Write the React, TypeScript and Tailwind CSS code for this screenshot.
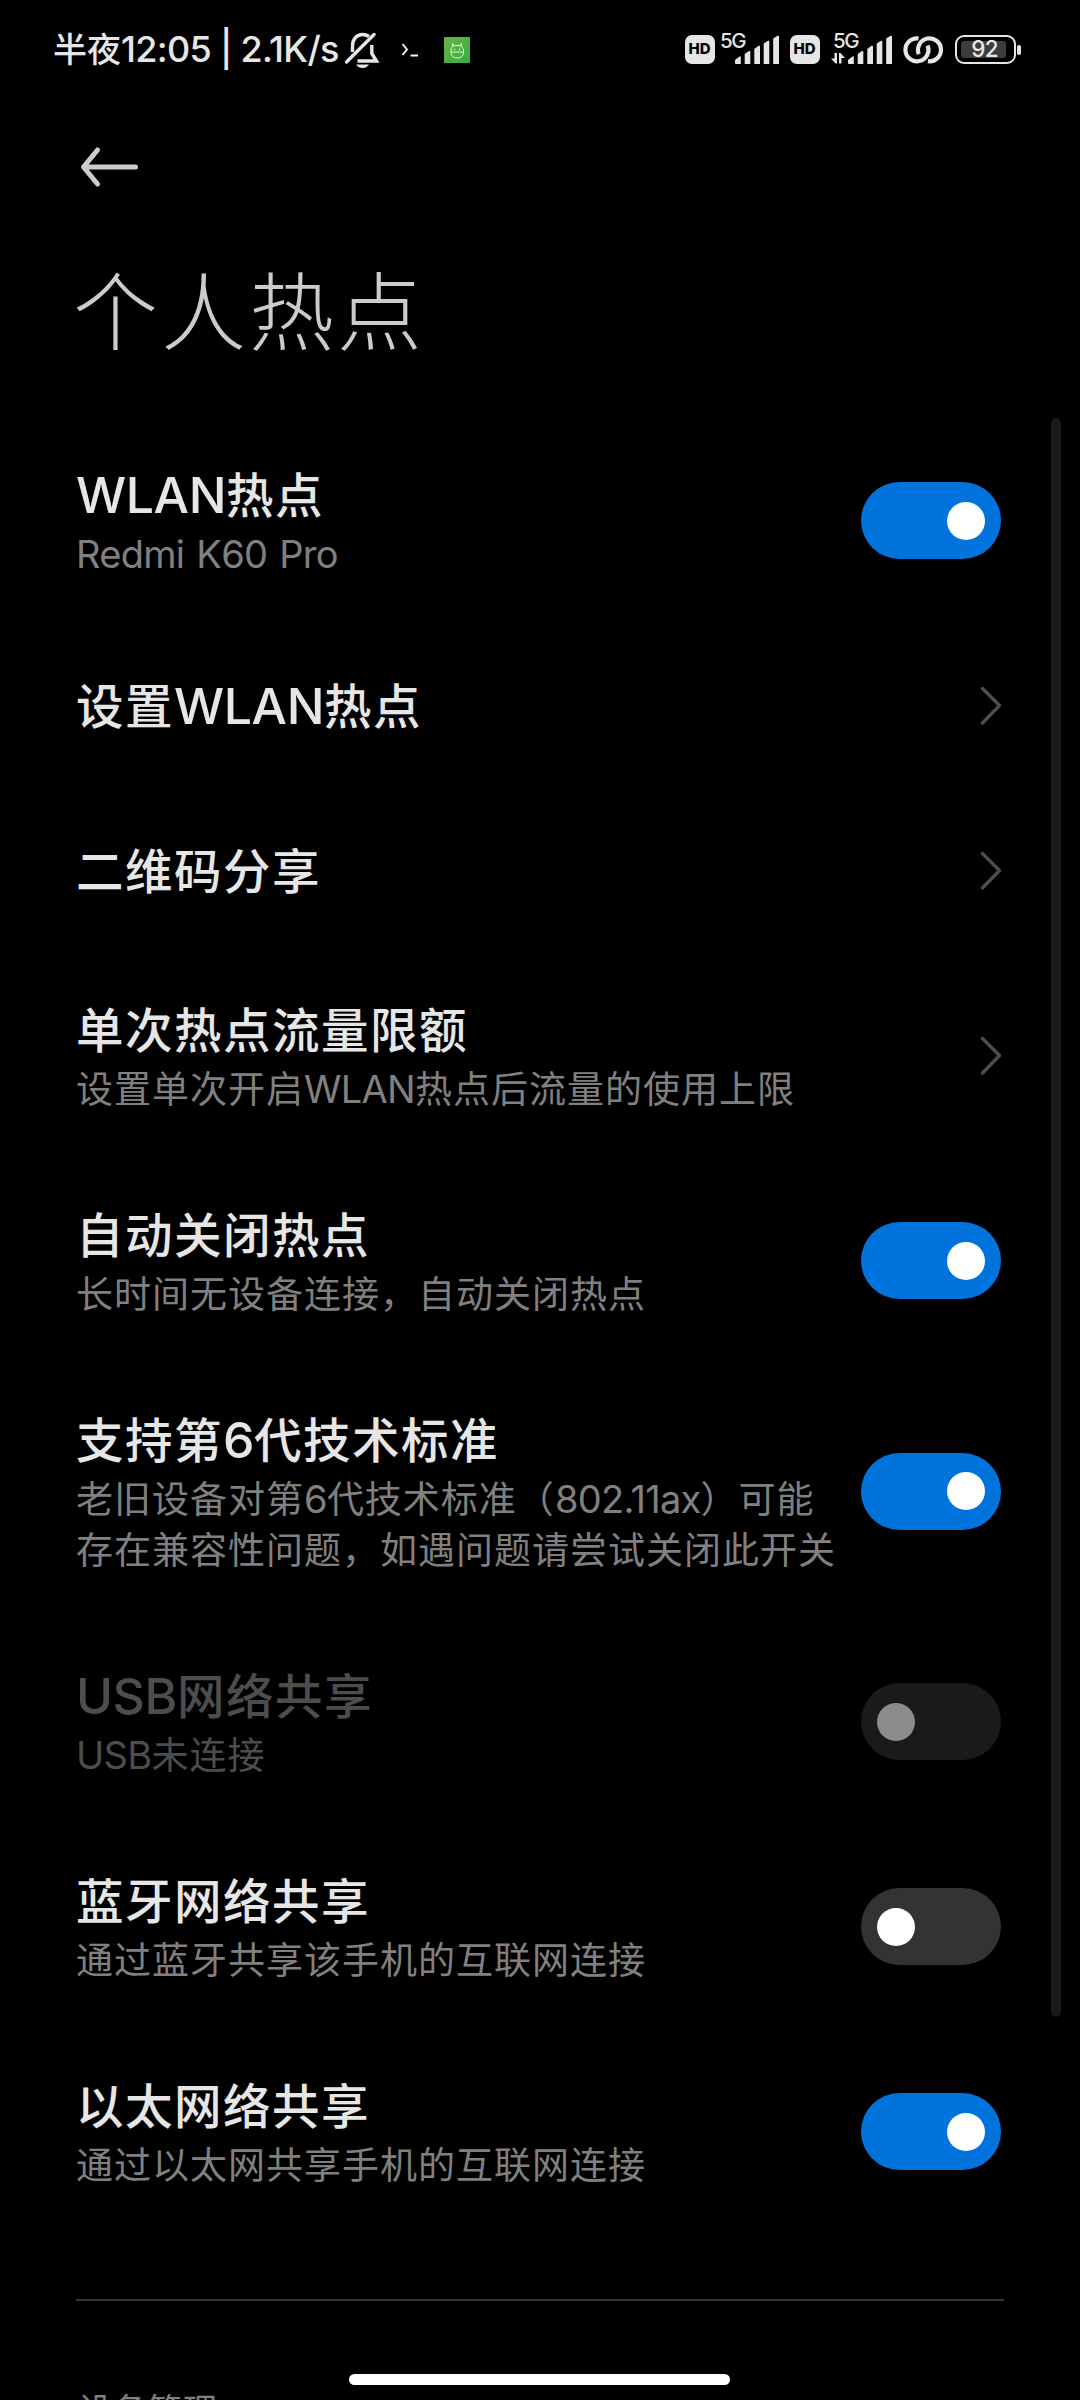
import React from "react";
import clsx from "clsx";

type Item = {
  title: string;
  desc?: string[];
  control: "on" | "off" | "arrow";
  disabled?: boolean;
};

const items: Item[] = [
  { title: "WLAN热点", desc: ["Redmi K60 Pro"], control: "on" },
  { title: "设置WLAN热点", control: "arrow" },
  { title: "二维码分享", control: "arrow" },
  {
    title: "单次热点流量限额",
    desc: ["设置单次开启WLAN热点后流量的使用上限"],
    control: "arrow",
  },
  {
    title: "自动关闭热点",
    desc: ["长时间无设备连接，自动关闭热点"],
    control: "on",
  },
  {
    title: "支持第6代技术标准",
    desc: [
      "老旧设备对第6代技术标准（802.11ax）可能",
      "存在兼容性问题，如遇问题请尝试关闭此开关",
    ],
    control: "on",
  },
  { title: "USB网络共享", desc: ["USB未连接"], control: "off", disabled: true },
  { title: "蓝牙网络共享", desc: ["通过蓝牙共享该手机的互联网连接"], control: "off" },
  { title: "以太网络共享", desc: ["通过以太网共享手机的互联网连接"], control: "on" },
];

// Latin runs use a wider face than the Chinese text around them
function Mixed({ text, latin }: { text: string; latin: string }) {
  return (
    <>
      {text.split(/([A-Za-z0-9:|/. ]+)/).map((part, i) =>
        i % 2 ? (
          <span key={i} className={latin}>
            {part}
          </span>
        ) : (
          part
        )
      )}
    </>
  );
}

function Toggle({ on, disabled }: { on: boolean; disabled?: boolean }) {
  return (
    <div
      className={clsx(
        "flex h-[77px] w-[140px] shrink-0 items-center rounded-full px-4",
        on ? "justify-end bg-[#0073dd]" : "justify-start",
        !on && (disabled ? "bg-[#1a1a1a]" : "bg-[#333333]")
      )}
    >
      <div className={clsx("size-[38px] rounded-full", disabled ? "bg-[#8c8c8c]" : "bg-white")} />
    </div>
  );
}

function Chevron() {
  return (
    <svg className="h-10 w-6 shrink-0" viewBox="0 0 24 40" fill="none">
      <path
        d="M5.5 2.5 22.5 19.5 5.5 37"
        stroke="#4d4d4d"
        strokeWidth="3.4"
        strokeLinecap="round"
        strokeLinejoin="round"
      />
    </svg>
  );
}

function Row({ item }: { item: Item }) {
  return (
    <div className="flex min-h-[165px] items-center justify-between py-[45px]">
      <div className="whitespace-nowrap">
        <div
          className={clsx(
            "h-16 text-[47.5px] leading-[59px] font-medium tracking-[1.5px]",
            item.disabled ? "text-[#4d4d4d]" : "text-[#e6e6e6]"
          )}
        >
          <Mixed text={item.title} latin="font-[Inter] text-[50px] tracking-[-0.4px]" />
        </div>
        {item.desc?.map((line) => (
          <div
            key={line}
            className={clsx(
              "h-[51px] text-[37px] leading-[51px] tracking-[1px]",
              item.disabled ? "text-[#4d4d4d]" : "text-[#808080]"
            )}
          >
            <Mixed
              text={line}
              latin="font-[Inter] text-[38px] tracking-[-0.7px] [word-spacing:2px]"
            />
          </div>
        ))}
      </div>
      {item.control === "arrow" ? (
        <Chevron />
      ) : (
        <Toggle on={item.control === "on"} disabled={item.disabled} />
      )}
    </div>
  );
}

function HdBadge() {
  return (
    <div className="mt-[5px] flex h-[29px] w-[30px] items-center justify-center rounded-[7px] bg-[#e6e6e6] font-[Inter] text-[15px] font-extrabold text-black">
      HD
    </div>
  );
}

function Signal({ data }: { data?: boolean }) {
  return (
    <svg className="h-9 w-16 overflow-visible" viewBox="0 0 64 36" fill="#e6e6e6">
      <text x="2" y="17.5" fontSize="20.5" fontFamily="Inter" fontWeight="500" textLength="26.5">
        5G
      </text>
      {data && (
        <path d="M3.5 23H6V33.5H4.5L0 28.5H3.5zM8 33.5V23H9.5L14 28H10.5V33.5z" />
      )}
      <path d="M17 30 21.5 26.5Q22.8 25.7 22.8 27.5V34H18Q17 34 17 33z" />
      <path d="M26.7 24 31 21Q32.3 20.5 32.3 22V34H26.7z" />
      <path d="M36.3 19 40.5 15.8Q42 15.2 42 17V34H36.3z" />
      <path d="M45.7 13.5 50 10.8Q51.3 10.3 51.3 12V34H45.7z" />
      <path d="M55.2 8.5 59.5 5.8Q61 5.2 61 7V34H55.2z" />
    </svg>
  );
}

function Battery({ level }: { level: number }) {
  return (
    <div className="mt-[5px] flex h-[29px] items-center gap-[1.5px]">
      <div className="h-[29px] w-[61px] rounded-[9px] border-[2.5px] border-[#e6e6e6] p-1">
        <div className="flex h-full w-[45px] items-center justify-center rounded-[3px] bg-[#3d3d3d] pl-[3px] font-[Inter] text-[22.5px] leading-none font-medium tracking-[-0.8px]">
          {level}
        </div>
      </div>
      <div className="h-[10px] w-1 rounded-full bg-[#e6e6e6]" />
    </div>
  );
}

function StatusBar() {
  return (
    <div className="flex h-[100px] shrink-0 items-start justify-between pt-[30px] pr-[59px] pl-[53px] text-[#e6e6e6]">
      <div className="flex h-10 items-center whitespace-nowrap">
        <div className="w-[290px] pb-[3px] text-[34px] leading-10 font-medium">
          <Mixed text="半夜12:05 | 2.1K/s" latin="font-[Inter] text-[36px] tracking-[-0.7px]" />
        </div>
        <svg className="ml-[2px] h-10 w-9" viewBox="0 0 36 40" fill="none" stroke="#e6e6e6" strokeWidth="3.4">
          <path d="M7.5 22V16C7.5 9 12 4.5 17.5 4.5Q21 4.5 24 6.5M26.8 15V23.5L31.5 31H12.5" />
          <path d="M1.5 32 29 4.5" strokeLinecap="round" />
          <path d="M11 34.5H24Q21.5 38 17.5 38T11 34.5z" fill="#e6e6e6" stroke="none" />
        </svg>
        <svg className="ml-5 h-5 w-[18px]" viewBox="0 0 18 20" fill="none" stroke="#ffffff" strokeWidth="1.8">
          <path d="M1.5 4 6 9.5 1.5 15M9.5 15.5H17" />
        </svg>
        <svg className="ml-[25px] size-[26px]" viewBox="0 0 26 26">
          <defs>
            <linearGradient id="bug" x1="0" y1="0" x2="1" y2="1">
              <stop offset="0" stopColor="#6ab344" />
              <stop offset="1" stopColor="#35ad45" />
            </linearGradient>
          </defs>
          <rect width="26" height="26" rx="1" fill="url(#bug)" />
          <g fill="none" stroke="#d9f2cf" strokeWidth="1">
            <path d="M8.5 9V6.5L10.5 8.5H15.5L17.5 6.5V9M7 15.5V13Q7 8.500 13 8.500T19.500 13V15.500Q19 21 13.200 21T7 15.500zM7 15H19.500" />
            <path d="M10 12.5h1.2M15 12.5h1.2" strokeWidth="1.4" />
          </g>
        </svg>
      </div>

      <div className="flex items-start">
        <HdBadge />
        <div className="mr-2 ml-[3px]">
          <Signal />
        </div>
        <HdBadge />
        <div className="mr-2 ml-[11px]">
          <Signal data />
        </div>
        <svg className="mt-[5px] mr-[10px] h-[30px] w-[42px]" viewBox="0 0 42 30" fill="none" stroke="#e6e6e6" strokeWidth="4.2">
          <path d="M15.5 3.4A11.5 11.5 0 1 0 24.6 10.5" />
          <path d="M15.8 19.1A11.5 11.5 0 1 1 24.9 26.2" />
        </svg>
        <Battery level={92} />
      </div>
    </div>
  );
}

export default function App() {
  return (
    <div className="relative flex h-[2400px] w-[1080px] flex-col overflow-hidden bg-black font-['Noto_Sans_CJK_SC',sans-serif]">
      <StatusBar />

      {/* header */}
      <div className="h-[318px] shrink-0 pt-[45px] pl-[78px]">
        <svg className="h-11 w-16" viewBox="0 0 64 44" fill="none">
          <path
            d="M19.5 5 5.5 22 19.5 39M6 22H57.5"
            stroke="#cccccc"
            strokeWidth="5"
            strokeLinecap="round"
            strokeLinejoin="round"
          />
        </svg>
        <h1 className="-ml-[5px] pt-[58px] text-[85px] leading-[120px] font-light tracking-[3px] text-[#cccccc]">
          个人热点
        </h1>
      </div>

      {/* settings list */}
      <div className="shrink-0 pr-[79px] pl-[76px]">
        {items.map((item) => (
          <Row key={item.title} item={item} />
        ))}
      </div>

      <div className="mt-[65px] mr-[76px] ml-[76px] h-[2px] shrink-0 bg-[#333333]" />
      <div className="mt-[83px] shrink-0 pl-[78px] text-[34px] leading-[50px] tracking-[1px] text-[#808080]">
        设备管理
      </div>

      {/* scroll bar and gesture bar float over the list */}
      <div className="absolute top-[418px] right-[19px] h-[1599px] w-[10px] rounded-full bg-[#1a1a1a]" />
      <div className="absolute top-[2374px] left-[349px] h-[11px] w-[381px] rounded-full bg-white" />
    </div>
  );
}
